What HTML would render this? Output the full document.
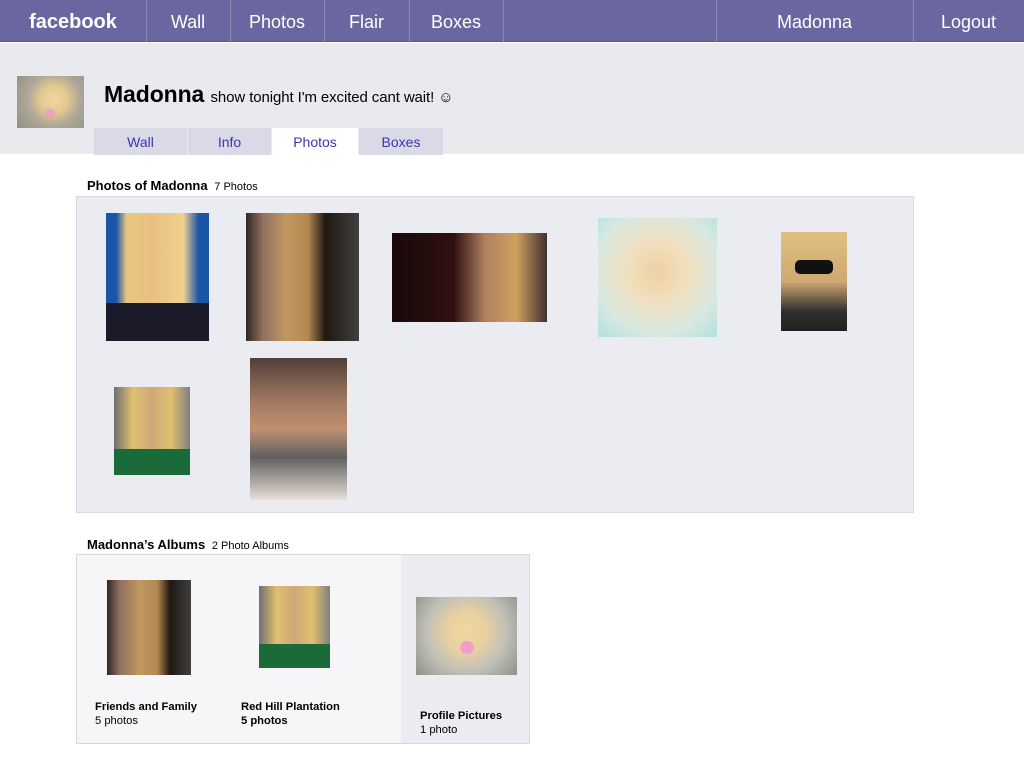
<!DOCTYPE html>
<html><head><meta charset="utf-8"><style>
*{margin:0;padding:0;box-sizing:border-box}
body{width:1024px;height:768px;background:#fff;font-family:"Liberation Sans",sans-serif;position:relative;overflow:hidden}
.a{position:absolute}
.nav{left:0;top:0;width:1024px;height:42px;background:#6a67a0;border-bottom:1px solid #5a578e}
.ni{position:absolute;top:1px;height:42px;line-height:42px;color:#fff;font-size:18px;text-align:center}
.sep{position:absolute;top:0;width:1px;height:42px;background:#8b88b8}
.tab{position:absolute;top:128px;height:27px;line-height:28px;text-align:center;font-size:14px;color:#3b37b0;background:#d9dae6}
.ph{position:absolute}
</style></head><body>
<div class="a nav">
<div class="ni" style="left:0;width:146px;font-weight:bold;font-size:20px">facebook</div>
<div class="ni" style="left:146px;width:84px">Wall</div>
<div class="ni" style="left:230px;width:94px">Photos</div>
<div class="ni" style="left:324px;width:85px">Flair</div>
<div class="ni" style="left:409px;width:94px">Boxes</div>
<div class="ni" style="left:716px;width:197px">Madonna</div>
<div class="ni" style="left:913px;width:111px">Logout</div>
<div class="sep" style="left:146px"></div><div class="sep" style="left:230px"></div><div class="sep" style="left:324px"></div><div class="sep" style="left:409px"></div><div class="sep" style="left:503px"></div><div class="sep" style="left:716px"></div><div class="sep" style="left:913px"></div>
</div>
<div class="a" style="left:0;top:43px;width:1024px;height:111px;background:#e9eaee"></div>
<div class="ph" style="left:17px;top:76px;width:67px;height:52px;background:radial-gradient(circle at 55% 45%,#f0d8a0 0,#e0c890 30%,#b0a898 55%,#909088 100%)"><div class="a" style="left:28px;top:33px;width:10px;height:9px;border-radius:50%;background:#f0a0c0"></div></div>
<div class="a" style="left:104px;top:81px;font-size:23px;font-weight:bold;color:#000;letter-spacing:-0.1px">Madonna <span style="font-size:15px;font-weight:normal">show tonight I'm excited cant wait! ☺</span></div>
<div class="tab" style="left:94px;width:93px">Wall</div>
<div class="tab" style="left:188px;width:83px">Info</div>
<div class="tab" style="left:272px;width:86px;background:#fff">Photos</div>
<div class="tab" style="left:359px;width:84px">Boxes</div>
<div class="a" style="left:87px;top:178px;font-size:13px;font-weight:bold">Photos of Madonna <span style="font-size:11px;font-weight:normal">&nbsp;7 Photos</span></div>
<div class="a" style="left:76px;top:196px;width:838px;height:317px;background:#ebecf1;border:1px solid #d8d9e0"></div>
<div class="ph" style="left:106px;top:213px;width:103px;height:128px;background:linear-gradient(90deg,#1a55a8 0,#1a55a8 10%,#e8c880 20%,#e8c080 45%,#f0d090 75%,#1a55a8 90%)"><div class="a" style="left:0;top:90px;width:103px;height:38px;background:#1a1a28"></div></div>
<div class="ph" style="left:246px;top:213px;width:113px;height:128px;background:linear-gradient(90deg,#302820 0,#907060 15%,#c09860 35%,#b08850 55%,#201810 70%,#404040 100%)"></div>
<div class="ph" style="left:392px;top:233px;width:155px;height:89px;background:linear-gradient(90deg,#180808 0,#301010 40%,#b08060 60%,#d0a060 80%,#403030 100%)"></div>
<div class="ph" style="left:598px;top:218px;width:119px;height:119px;background:radial-gradient(circle at 50% 45%,#f0d0a0 0,#f0e0c0 35%,#d8e8e0 70%,#b0e0e0 100%)"></div>
<div class="ph" style="left:781px;top:232px;width:66px;height:99px;background:linear-gradient(180deg,#e0c080 0,#d0a870 50%,#303030 80%,#202020 100%)"><div class="a" style="left:14px;top:28px;width:38px;height:14px;background:#111;border-radius:5px"></div></div>
<div class="ph" style="left:114px;top:387px;width:76px;height:88px;background:linear-gradient(90deg,#707070 0,#e0c070 25%,#d0a878 50%,#e0c070 75%,#808080 100%)"><div class="a" style="left:0;top:62px;width:76px;height:26px;background:#1a6a3a"></div></div>
<div class="ph" style="left:250px;top:358px;width:97px;height:142px;background:linear-gradient(180deg,#504038 0,#a07860 30%,#c09070 50%,#606060 70%,#e8e0d8 100%)"></div>
<div class="a" style="left:87px;top:537px;font-size:13px;font-weight:bold">Madonna’s Albums <span style="font-size:11px;font-weight:normal">&nbsp;2 Photo Albums</span></div>
<div class="a" style="left:76px;top:554px;width:454px;height:190px;background:#f6f6f9;border:1px solid #d8d9e0"></div>
<div class="a" style="left:401px;top:555px;width:128px;height:188px;background:#ebecf1"></div>
<div class="ph" style="left:107px;top:580px;width:84px;height:95px;background:linear-gradient(90deg,#302820 0,#907060 15%,#c09860 40%,#b08850 60%,#201810 75%,#404040 100%)"></div>
<div class="ph" style="left:259px;top:586px;width:71px;height:82px;background:linear-gradient(90deg,#707070 0,#e0c070 25%,#d0a878 50%,#e0c070 75%,#808080 100%)"><div class="a" style="left:0;top:58px;width:71px;height:24px;background:#1a6a3a"></div></div>
<div class="ph" style="left:416px;top:597px;width:101px;height:78px;background:radial-gradient(circle at 50% 45%,#f0d8a0 0,#e8d0a0 30%,#c0c0b8 60%,#909088 100%)"><div class="a" style="left:44px;top:44px;width:14px;height:13px;border-radius:50%;background:#f0a0c8"></div></div>
<div class="a" style="left:95px;top:700px;font-size:11.2px;line-height:14px"><b>Friends and Family</b><br>5 photos</div>
<div class="a" style="left:241px;top:700px;font-size:11.2px;line-height:14px;font-weight:bold">Red Hill Plantation<br>5 photos</div>
<div class="a" style="left:420px;top:709px;font-size:11.2px;line-height:14px"><b>Profile Pictures</b><br>1 photo</div>
</body></html>
